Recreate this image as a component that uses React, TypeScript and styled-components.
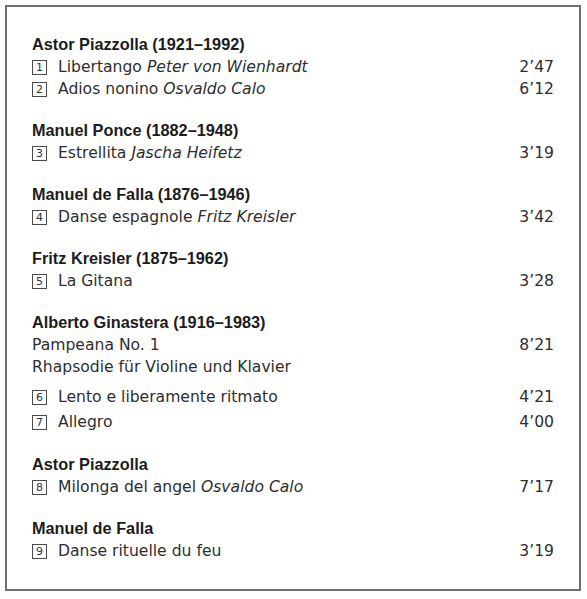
import styled, { createGlobalStyle } from 'styled-components';

type Track = { no?: number; title: string; artist?: string; time?: string; gap?: number; h?: number };
type Group = { composer: string; tracks: Track[] };

const groups: Group[] = [
  {
    composer: 'Astor Piazzolla (1921–1992)',
    tracks: [
      { no: 1, title: 'Libertango', artist: 'Peter von Wienhardt', time: '2’47' },
      { no: 2, title: 'Adios nonino', artist: 'Osvaldo Calo', time: '6’12' },
    ],
  },
  {
    composer: 'Manuel Ponce (1882–1948)',
    tracks: [{ no: 3, title: 'Estrellita', artist: 'Jascha Heifetz', time: '3’19' }],
  },
  {
    composer: 'Manuel de Falla (1876–1946)',
    tracks: [{ no: 4, title: 'Danse espagnole', artist: 'Fritz Kreisler', time: '3’42' }],
  },
  {
    composer: 'Fritz Kreisler (1875–1962)',
    tracks: [{ no: 5, title: 'La Gitana', time: '3’28' }],
  },
  {
    composer: 'Alberto Ginastera (1916–1983)',
    tracks: [
      { title: 'Pampeana No. 1', time: '8’21' },
      { title: 'Rhapsodie für Violine und Klavier' },
      { no: 6, title: 'Lento e liberamente ritmato', time: '4’21', gap: 6, h: 26 },
      { no: 7, title: 'Allegro', time: '4’00', h: 24 },
    ],
  },
  {
    composer: 'Astor Piazzolla',
    tracks: [{ no: 8, title: 'Milonga del angel', artist: 'Osvaldo Calo', time: '7’17' }],
  },
  {
    composer: 'Manuel de Falla',
    tracks: [{ no: 9, title: 'Danse rituelle du feu', time: '3’19' }],
  },
];

const App = () => {
  return (
    <>
      <GlobalStyle />
      <Frame>
        {groups.map((g, gi) => (
          <Section key={gi}>
            <Composer>{g.composer}</Composer>
            {g.tracks.map((t, ti) => (
              <Row key={ti} $gap={t.gap} $h={t.h}>
                {t.no !== undefined && <NumBox>{t.no}</NumBox>}
                <Title>
                  {t.title}
                  {t.artist && <Artist> {t.artist}</Artist>}
                </Title>
                {t.time && <Time>{t.time}</Time>}
              </Row>
            ))}
          </Section>
        ))}
      </Frame>
    </>
  );
};

const GlobalStyle = createGlobalStyle`
  html, body {
    margin: 0;
    padding: 0;
    background: #fdfdfd;
  }
  body {
    font-family: 'DejaVu Sans', 'Liberation Sans', sans-serif;
    color: #2e2e2e;
  }
`;

const Frame = styled.main`
  box-sizing: border-box;
  margin: 5px 0 0 5px;
  width: 576px;
  height: 586px;
  border: 2px solid #6e6e6e;
  background: #fff;
  padding: 25px 25px 0 25px;
  display: flex;
  flex-direction: column;
  gap: 18px;
`;

const Section = styled.section`
  display: flex;
  flex-direction: column;
`;

const Composer = styled.h3`
  margin: 0;
  font-family: 'Liberation Sans', Arial, sans-serif;
  font-size: 16.3px;
  line-height: 24px;
  font-weight: 700;
  color: #1c1c1c;
`;

const Row = styled.div<{ $gap?: number; $h?: number }>`
  display: flex;
  align-items: center;
  height: ${({ $h }) => $h ?? 22}px;
  margin-top: ${({ $gap }) => $gap ?? 0}px;
  font-size: 15.6px;
`;

const NumBox = styled.span`
  box-sizing: border-box;
  flex: none;
  width: 15px;
  height: 15px;
  margin-right: 11px;
  border: 1px solid #4a4a4a;
  font-size: 11px;
  line-height: 13px;
  text-align: center;
  color: #333;
`;

const Title = styled.span`
  flex: 1;
  white-space: nowrap;
`;

const Artist = styled.i`
  font-style: italic;
`;

const Time = styled.span`
  flex: none;
  text-align: right;
`;

export default App;
